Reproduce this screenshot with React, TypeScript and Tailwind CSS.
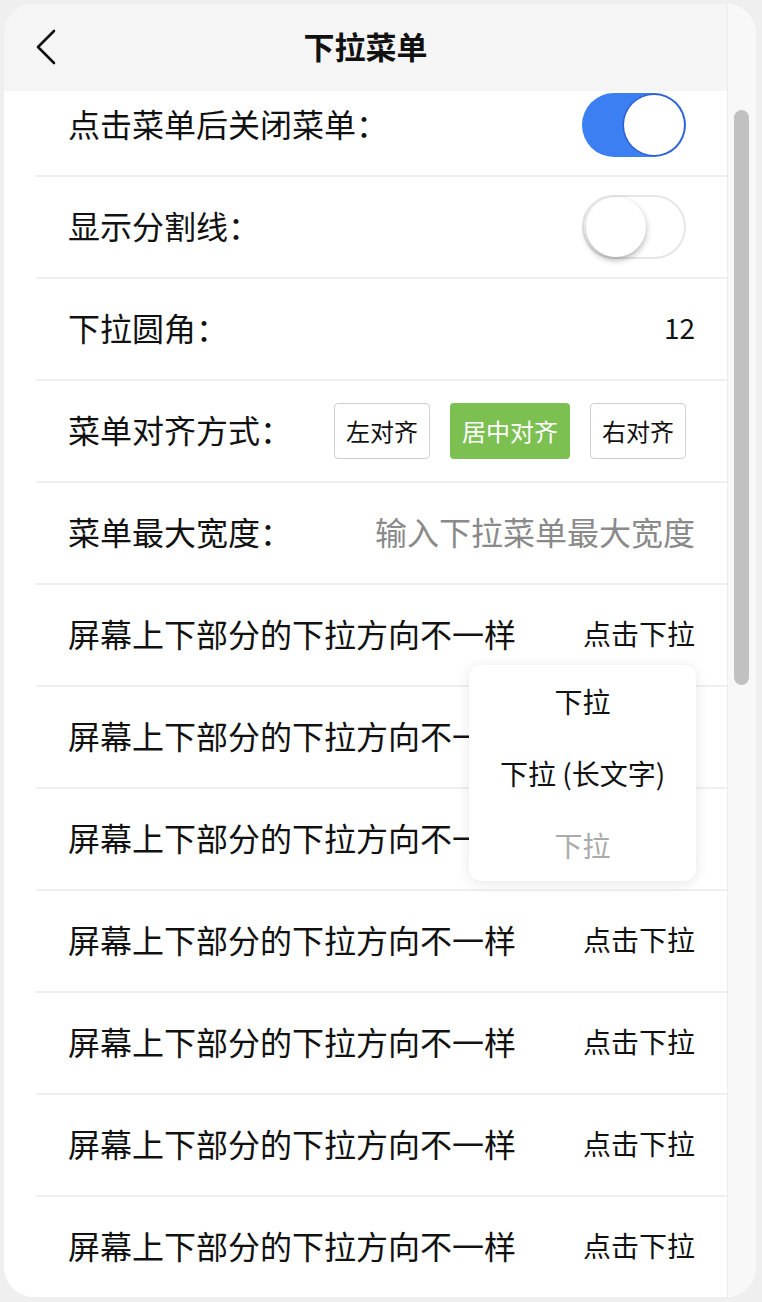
import React from 'react';

const Toggle: React.FC<{ on: boolean }> = ({ on }) => (
  <div
    className={`mr-[9px] flex h-[64px] w-[104px] items-center rounded-full p-[2px] ${
      on ? 'justify-end bg-[#3b7ff2]' : 'justify-start border-2 border-[#e6e6e6] bg-white'
    }`}
  >
    <div
      className={`h-[60px] w-[60px] rounded-full bg-white ${
        on ? 'shadow-[0_0_0_1.5px_#2f5fcf]' : 'shadow-[0_3px_6px_rgba(0,0,0,0.3)]'
      }`}
    ></div>
  </div>
);

const Row: React.FC<{ label: string; children?: React.ReactNode }> = ({ label, children }) => (
  <div className="ml-[32px] flex h-[102px] items-center justify-between border-b-2 border-[#efefef] pl-[32px] pr-[32px]">
    <span className="-translate-y-[2px] text-[32px] text-[#111]">{label}</span>
    {children}
  </div>
);

export default function App() {
  const lower = Array.from({ length: 7 });

  return (
    <div className="min-h-[1302px] w-[762px] bg-[#efefef] p-[4px] font-['Noto_Sans_CJK_SC','Liberation_Sans',sans-serif]">
      <div className="flex h-[1293px] w-[752px] overflow-hidden rounded-[30px] bg-white">
        <div className="flex min-w-0 flex-1 flex-col">
          {/* 顶部导航 */}
          <div className="relative flex h-[87px] shrink-0 items-center justify-center bg-[#f5f5f5]">
            <svg className="absolute left-[30px] top-[24px]" width="24" height="38" viewBox="0 0 24 38" fill="none">
              <path d="M20 3 L4 19 L20 35" stroke="#111" strokeWidth="2.6" strokeLinecap="round" strokeLinejoin="round" />
            </svg>
            <span className="-translate-y-[1px] text-[31px] font-bold text-[#111]">下拉菜单</span>
          </div>

          {/* 列表 */}
          <div className="relative min-h-0 flex-1 overflow-hidden">
            <div className="-mt-[16px]">
              <Row label="点击菜单后关闭菜单：">
                <Toggle on />
              </Row>
              <Row label="显示分割线：">
                <Toggle on={false} />
              </Row>
              <Row label="下拉圆角：">
                <span className="-translate-y-[2px] text-[28px] text-[#111]">12</span>
              </Row>
              <Row label="菜单对齐方式：">
                <div className="mr-[9px] flex gap-[20px]">
                  <div className="flex h-[56px] w-[96px] items-center justify-center rounded-[4px] border border-[#cfcfcf] text-[24px] text-[#111]">左对齐</div>
                  <div className="flex h-[56px] w-[120px] items-center justify-center rounded-[4px] bg-[#7cc052] text-[24px] text-white">居中对齐</div>
                  <div className="flex h-[56px] w-[96px] items-center justify-center rounded-[4px] border border-[#cfcfcf] text-[24px] text-[#111]">右对齐</div>
                </div>
              </Row>
              <Row label="菜单最大宽度：">
                <span className="-translate-y-[2px] text-[32px] text-[#8a8a8a]">输入下拉菜单最大宽度</span>
              </Row>
              {lower.map((_, i) => (
                <Row key={i} label="屏幕上下部分的下拉方向不一样">
                  <span className="-translate-y-[2px] text-[28px] text-[#111]">点击下拉</span>
                </Row>
              ))}
            </div>

            {/* 下拉弹层 */}
            <div className="absolute left-[465px] top-[574px] flex h-[216px] w-[227px] flex-col rounded-[12px] bg-white shadow-[0_2px_14px_rgba(0,0,0,0.1)]">
              <div className="flex h-[72px] items-center justify-center text-[28px] text-[#111]">下拉</div>
              <div className="flex h-[72px] items-center justify-center text-[28px] text-[#111]">下拉 (长文字)</div>
              <div className="flex h-[72px] items-center justify-center text-[28px] text-[#aaaaaa]">下拉</div>
            </div>
          </div>
        </div>

        {/* 滚动条 */}
        <div className="w-[29px] shrink-0 border-l border-[#ebebeb] bg-[#f8f8f8] pl-[6px] pt-[106px]">
          <div className="h-[575px] w-[15px] rounded-full bg-[#c1c1c1]"></div>
        </div>
      </div>
    </div>
  );
}
